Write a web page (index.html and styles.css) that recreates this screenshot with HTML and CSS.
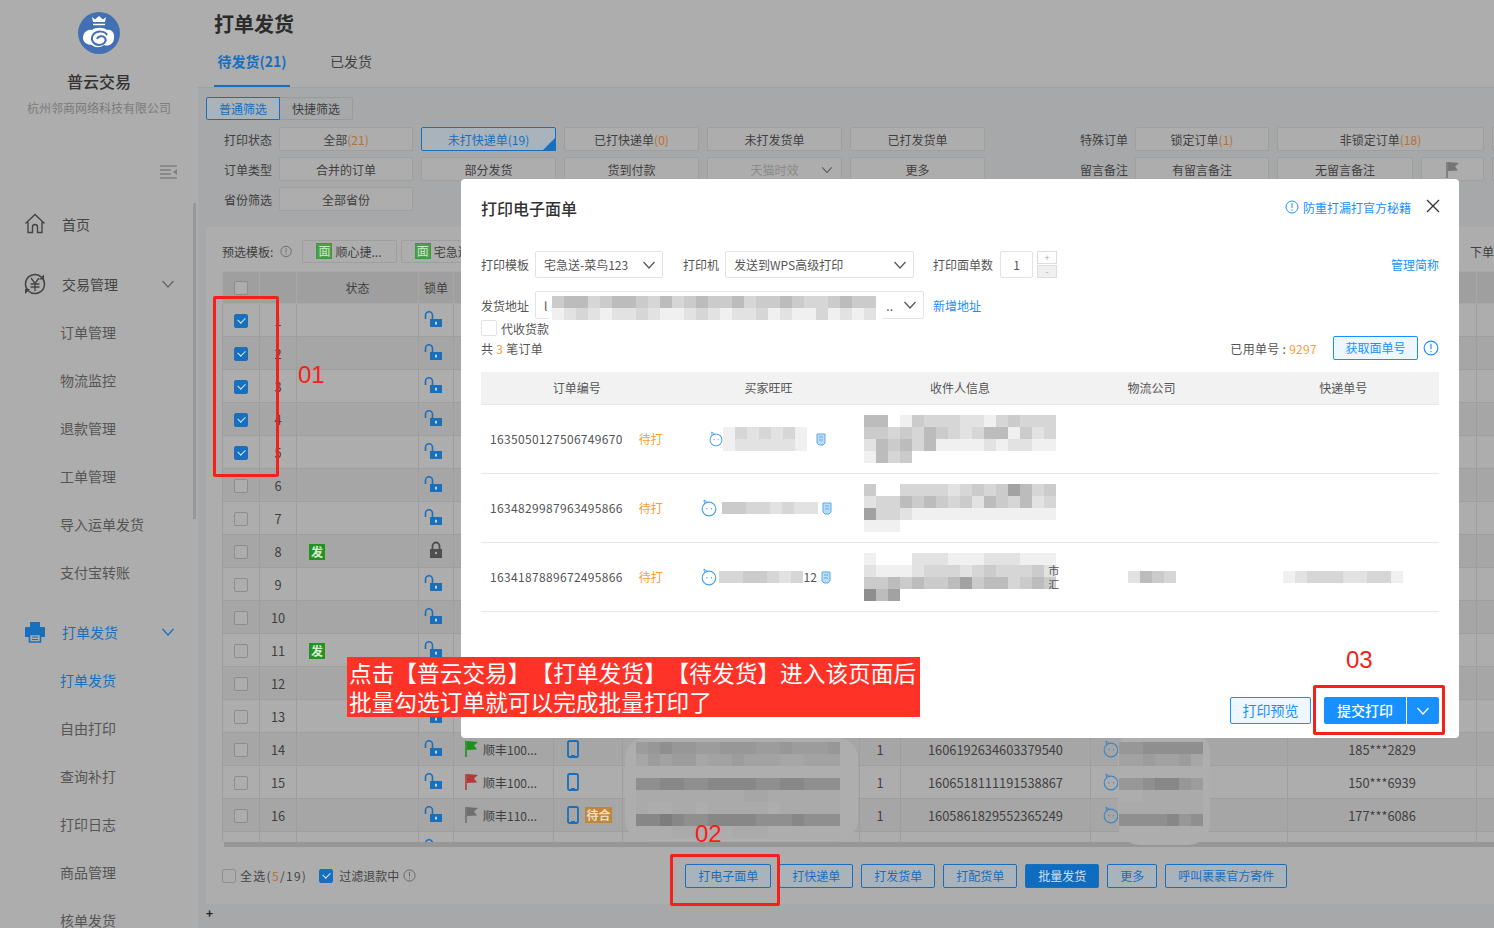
FILE: index.html
```html
<!DOCTYPE html>
<html lang="zh-CN">

<head>
    <meta charset="UTF-8">
    <title>打单发货</title>
    <link rel="stylesheet" href="styles.css">
</head>

<body>
    <svg class="sprite" width="0" height="0">
        <symbol id="i-info" viewBox="0 0 14 14"><circle cx="7" cy="7" r="6" fill="none" stroke="currentColor"/><path d="M7 3.200v5M7 9.600v1.200" stroke="currentColor" fill="none"/></symbol>
        <symbol id="i-chev" viewBox="0 0 14 14"><path d="M1.500 4l5.500 6 5.500-6" fill="none" stroke="currentColor" stroke-width="1.200"/></symbol>
        <symbol id="i-open" viewBox="0 0 18 16"><path d="M1.500 8V4.300a3.500 3.500 0 0 1 7 0V8" fill="none" stroke="currentColor" stroke-width="1.600"/><path d="M6 8h12v8H6z" fill="currentColor"/><path d="M12 10.800v2.600" stroke="#ddd" stroke-width="1.800"/></symbol>
        <symbol id="i-lock" viewBox="0 0 14 18"><path d="M3.500 8V5a3.500 3.500 0 0 1 7 0v3" fill="none" stroke="currentColor" stroke-width="1.800"/><path d="M1 8h12v9H1z" fill="currentColor"/><circle cx="7" cy="12" r="1.200" fill="#aaa"/></symbol>
        <symbol id="i-flag" viewBox="0 0 14 18"><path d="M1 1v16" stroke="currentColor" stroke-width="1.600"/><path d="M2 1l11 1-4 3.500 3 4-10 .5z" fill="currentColor"/></symbol>
        <symbol id="i-phone" viewBox="0 0 12 18"><rect x="1" y="1" width="10" height="16" rx="1.600" fill="none" stroke="currentColor" stroke-width="1.800"/><path d="M4 15.500h4" stroke="currentColor"/></symbol>
        <symbol id="i-ww" viewBox="0 0 16 18"><circle cx="8" cy="10" r="6.800" fill="none" stroke="currentColor" stroke-width="1.200"/><path d="M3.500 4.500 3 1l3.500 2.400" fill="none" stroke="currentColor"/><path d="M6 9v1.400M10.500 9v1.400" stroke="currentColor"/></symbol>
        <symbol id="i-copy" viewBox="0 0 10 14"><path d="M1 2h8v9l-2 2H3l-2-2z" fill="#bcdcf8" stroke="#5aa9e8"/><path d="M3 5h4M3 8h4" stroke="#5aa9e8"/></symbol>
    </svg>

    <div class="app">
        <aside class="sidebar">
            <svg class="logo" width="44" height="44" viewBox="0 0 44 44">
                <circle cx="22" cy="22" r="21" fill="#4370b2"/>
                <path d="M15 6l3 2.500 4-3.500 4 3.500L29 6l-1 5H16z" fill="#fff"/>
                <path d="M16 13.500h12" stroke="#fff" stroke-width="1.500"/>
                <path d="M6 27c0-5 4-9 9-8 3-3 12-3 15 0 5-1 8 4 7 8 0 6-6 9-10 7-4 3-9 3-12 0-5 0-9-3-9-7z" fill="#fff"/>
                <path d="M30 24c-2-4-10-5-14 0-3 5 1 10 6 10 5 0 8-4 6-7-2-3-7-2-8 1" fill="none" stroke="#4370b2" stroke-width="2"/>
            </svg>
            <div class="brand">普云交易</div>
            <div class="company">杭州邻商网络科技有限公司</div>
            <div class="collapse">
                <svg width="18" height="16" viewBox="0 0 18 16"><path d="M1 2h17M1 6h11M1 10h11M1 14h17" stroke="#7f7f7f" stroke-width="1.500"/><path d="M18 5v6l-4-3z" fill="#7f7f7f"/></svg>
            </div>
            <nav class="menu">
                <a class="menu-top">
                    <svg width="22" height="22" viewBox="0 0 22 22"><path d="M1.500 10.500 11 1.500l9.500 9M4 9v10.500h4.500V14a2.500 2.500 0 0 1 5 0v5.500H18V9" fill="none" stroke="#444" stroke-width="1.400"/></svg>
                    <span>首页</span>
                </a>
                <a class="menu-top">
                    <svg width="22" height="22" viewBox="0 0 22 22"><path d="M17.700 4.300A9.500 9.500 0 0 0 1.500 11c0 2.600 1 5 2.800 6.700M4.300 17.700A9.500 9.500 0 0 0 20.500 11c0-2.600-1-5-2.800-6.700" fill="none" stroke="#444" stroke-width="1.500"/><path d="M20 1.500v5h-5zM1 21v-5h5z" fill="#444"/><path d="M7 5l4 5.500L15 5M6.500 11h9M6.500 14h9M11 10.500V18" fill="none" stroke="#444" stroke-width="1.300"/></svg>
                    <span>交易管理</span>
                    <svg class="chev" width="14" height="14"><use href="#i-chev"/></svg>
                </a>
                <a class="menu-sub">订单管理</a>
                <a class="menu-sub">物流监控</a>
                <a class="menu-sub">退款管理</a>
                <a class="menu-sub">工单管理</a>
                <a class="menu-sub">导入运单发货</a>
                <a class="menu-sub">支付宝转账</a>
                <a class="menu-top active">
                    <svg width="22" height="22" viewBox="0 0 22 22"><path d="M6 1h10v5H6z" fill="#176fbd"/><path d="M2 6h18a1 1 0 0 1 1 1v9h-4v-3H5v3H1V7a1 1 0 0 1 1-1z" fill="#176fbd"/><path d="M5.500 13.500h11v7.500h-11z" fill="none" stroke="#176fbd" stroke-width="1.600"/><path d="M8 16h6M8 18.500h6" stroke="#176fbd"/></svg>
                    <span>打单发货</span>
                    <svg class="chev" width="14" height="14"><use href="#i-chev"/></svg>
                </a>
                <a class="menu-sub active">打单发货</a>
                <a class="menu-sub">自由打印</a>
                <a class="menu-sub">查询补打</a>
                <a class="menu-sub">打印日志</a>
                <a class="menu-sub">商品管理</a>
                <a class="menu-sub">核单发货</a>
            </nav>
            <div class="side-scroll"></div>
        </aside>

        <main class="main">
            <div class="page-head">
                <h1>打单发货</h1>
                <div class="tabs">
                    <a class="tab active">待发货(21)</a>
                    <a class="tab">已发货</a>
                </div>
            </div>

            <div class="content">
                <div class="switch">
                    <a class="active">普通筛选</a>
                    <a>快捷筛选</a>
                </div>

                <div class="filters">
                    <div class="filter-row">
                        <label>打印状态</label>
                        <a class="fb w134">全部<em>(21)</em></a>
                        <a class="fb w135 on">未打快递单<em class="blue">(19)</em><i class="corner"></i></a>
                        <a class="fb w135">已打快递单<em>(0)</em></a>
                        <a class="fb w135">未打发货单</a>
                        <a class="fb w135">已打发货单</a>
                        <label class="label-right">特殊订单</label>
                        <a class="fb w134">锁定订单<em>(1)</em></a>
                        <a class="fb w207">非锁定订单<em>(18)</em></a>
                        <a class="fb w40"></a>
                    </div>
                    <div class="filter-row">
                        <label>订单类型</label>
                        <a class="fb w134">合并的订单</a>
                        <a class="fb w135">部分发货</a>
                        <a class="fb w135">货到付款</a>
                        <a class="fb w135 muted">天猫时效<svg width="12" height="12"><use href="#i-chev"/></svg></a>
                        <a class="fb w135">更多</a>
                        <label class="label-right">留言备注</label>
                        <a class="fb w134">有留言备注</a>
                        <a class="fb w136">无留言备注</a>
                        <a class="fb w63"><svg class="flag-grey" width="14" height="18"><use href="#i-flag"/></svg></a>
                        <a class="fb w40"></a>
                    </div>
                    <div class="filter-row">
                        <label>省份筛选</label>
                        <a class="fb w134">全部省份</a>
                    </div>
                </div>

                <section class="card">
                    <div class="preset">
                        <span>预选模板:</span>
                        <svg class="tip" width="13" height="13"><use href="#i-info"/></svg>
                        <a class="preset-btn"><b class="mian">面</b>顺心捷...</a>
                        <a class="preset-btn"><b class="mian">面</b>宅急送</a>
                        <span class="preset-end">下单</span>
                    </div>
                    <div class="table-wrap">
                        <table class="orders">
                            <colgroup>
                                <col class="c1"><col class="c2"><col class="c3"><col class="c4"><col class="c5">
                                <col class="c6"><col class="c7"><col class="c8"><col class="c9"><col class="c10">
                                <col class="c11"><col class="c12">
                            </colgroup>
                            <thead>
                                <tr>
                                    <th><i class="cb"></i></th>
                                    <th></th>
                                    <th>状态</th>
                                    <th>锁单</th>
                                    <th></th><th></th><th></th><th></th><th></th><th></th><th></th><th></th>
                                </tr>
                            </thead>
                            <tbody id="order-rows"></tbody>
                        </table>
                    </div>
                    <div class="hscroll"></div>
                    <div class="card-foot">
                        <i class="cb"></i><span class="foot-label foot-count">全选(<em>5</em>/19)</span>
                        <i class="cb checked foot-check"></i><span class="foot-label foot-filter">过滤退款中</span>
                        <svg class="tip foot-tip" width="13" height="13"><use href="#i-info"/></svg>
                        <div class="foot-btns">
                            <a class="ob w86">打电子面单</a>
                            <a class="ob w74">打快递单</a>
                            <a class="ob w74">打发货单</a>
                            <a class="ob w74">打配货单</a>
                            <a class="ob w74 fill">批量发货</a>
                            <a class="ob w50">更多</a>
                            <a class="ob w122">呼叫裹裹官方寄件</a>
                        </div>
                    </div>
                </section>
                <div class="plus">+</div>
            </div>
        </main>
    </div>

    <div class="blob blob-a"><div class="mosaic" data-cells="56766556665565556/35455344544433444/................./77887788887788777/22222222233222222/21122122222122222/88987788887778777/11122111222111111"></div></div>
    <div class="blob blob-b"><div class="mosaic" data-cells="6677777/4454453/......./6678865/1122222/2222222/7777867/1111111"></div></div>

    <div class="modal">
        <div class="modal-head">
            <h2>打印电子面单</h2>
            <a class="modal-link"><svg width="14" height="14"><use href="#i-info"/></svg>防重打漏打官方秘籍</a>
            <svg class="modal-close" width="14" height="14" viewBox="0 0 14 14"><path d="M1 1l12 12M13 1 1 13" stroke="#333" stroke-width="1.300"/></svg>
        </div>

        <div class="form-row">
            <label>打印模板</label>
            <div class="select w128">宅急送-菜鸟123<svg width="14" height="14"><use href="#i-chev"/></svg></div>
            <label class="ml20">打印机</label>
            <div class="select w189">发送到WPS高级打印<svg width="14" height="14"><use href="#i-chev"/></svg></div>
            <label class="ml19">打印面单数</label>
            <div class="count">1</div>
            <div class="stepper"><span>+</span><span class="minus">-</span></div>
            <a class="link push">管理简称</a>
        </div>

        <div class="form-row addr">
            <label>发货地址</label>
            <div class="select w389">
                <span>l</span><span class="dots">..</span><svg width="14" height="14"><use href="#i-chev"/></svg>
                <div class="mosaic addr-mosaic" data-cells="455345543534544534454334544/123212232112321223121131212"></div>
            </div>
            <a class="link ml9">新增地址</a>
        </div>

        <div class="cod"><i class="cb light"></i>代收货款</div>

        <div class="summary">
            <span>共 <em>3</em> 笔订单</span>
            <div class="summary-right">
                <span>已用单号 : <em>9297</em></span>
                <a class="get-no">获取面单号</a>
                <svg class="get-tip" width="16" height="16"><use href="#i-info"/></svg>
            </div>
        </div>

        <table class="ship">
            <thead>
                <tr><th>订单编号</th><th>买家旺旺</th><th>收件人信息</th><th>物流公司</th><th>快递单号</th></tr>
            </thead>
            <tbody>
                <tr>
                    <td><div class="order-no"><span>1635050127506749670</span><em>待打</em></div></td>
                    <td>
                        <div class="buyer first">
                            <svg width="14" height="16"><use href="#i-ww"/></svg>
                            <div class="mosaic" data-cells="1323231/1222221"></div>
                            <svg class="copy" width="10" height="14"><use href="#i-copy"/></svg>
                        </div>
                    </td>
                    <td><div class="mosaic" data-cells="5501433322134333/4434354323551423/2545351111212211/1534000000000000"></div></td>
                    <td></td><td></td>
                </tr>
                <tr>
                    <td><div class="order-no"><span>1634829987963495866</span><em>待打</em></div></td>
                    <td>
                        <div class="buyer">
                            <svg width="16" height="18"><use href="#i-ww"/></svg>
                            <div class="mosaic" data-cells="44332322"></div>
                            <svg class="copy" width="10" height="14"><use href="#i-copy"/></svg>
                        </div>
                    </td>
                    <td><div class="mosaic" data-cells="4003333234346534/2335454342543523/6332111111111111/1110000000000000"></div></td>
                    <td></td><td></td>
                </tr>
                <tr>
                    <td><div class="order-no"><span>1634187889672495866</span><em>待打</em></div></td>
                    <td>
                        <div class="buyer third">
                            <svg width="16" height="18"><use href="#i-ww"/></svg>
                            <div class="mosaic" data-cells="3344323"></div><span class="buyer-no">12</span>
                            <svg class="copy" width="10" height="14"><use href="#i-copy"/></svg>
                        </div>
                    </td>
                    <td>
                        <div class="recv-wrap">
                            <div class="mosaic" data-cells="1000222111222111/2111233323433342/4454544564553454/7560000000000000"></div>
                            <span class="recv-tail">市<br>汇</span>
                        </div>
                    </td>
                    <td><div class="mosaic center" data-cells="2543"></div></td>
                    <td><div class="mosaic center" data-cells="1233322331"></div></td>
                </tr>
            </tbody>
        </table>

        <div class="modal-foot">
            <a class="preview">打印预览</a>
            <a class="submit">提交打印</a>
            <a class="submit-more"><svg width="14" height="14"><use href="#i-chev"/></svg></a>
        </div>
    </div>

    <div class="banner">点击【普云交易】【打单发货】【待发货】进入该页面后<br>批量勾选订单就可以完成批量打印了</div>
    <div class="red-box box-01"></div>
    <div class="red-box box-02"></div>
    <div class="red-box box-03"></div>
    <div class="red-num num-01">01</div>
    <div class="red-num num-02">02</div>
    <div class="red-num num-03">03</div>

    <script src="script.js"></script>
</body>

</html>
```
FILE: styles.css
```css
* {
    box-sizing: border-box;
}

html,
body {
    margin: 0;
    height: 100%;
    overflow: hidden;
}

body {
    font-family: "Noto Sans CJK SC", "Noto Sans", sans-serif;
    font-size: 12px;
    color: #3f3f3f;
    background-color: #a6a8aa;
}

em {
    font-style: normal;
}

.sprite {
    position: absolute;
}

.app {
    display: flex;
    height: 928px;
}

/* sidebar */
.sidebar {
    position: relative;
    width: 198px;
    flex: none;
    height: 928px;
    overflow: hidden;
    background-color: #adadad;
    text-align: center;
}

.logo {
    display: block;
    margin: 11px auto 0;
}

.brand {
    margin-top: 14px;
    font-size: 16px;
    line-height: 24px;
    font-weight: 500;
    color: #333;
}

.company {
    margin-top: 5px;
    line-height: 20px;
    color: #7b7b7b;
}

.collapse {
    height: 16px;
    margin-top: 46px;
    padding-left: 159px;
    text-align: left;
}

.menu {
    margin-top: 20px;
}

.menu-top {
    display: flex;
    align-items: center;
    height: 48px;
    padding-left: 24px;
    font-size: 14px;
    color: #444;
}

.menu-top + .menu-top,
.menu-sub + .menu-top {
    margin-top: 12px;
}

.menu-top span {
    margin-left: 16px;
}

.menu-top .chev {
    margin-left: auto;
    margin-right: 23px;
    color: #666;
}

.menu-top.active,
.menu-top.active .chev,
.menu-sub.active {
    color: #176fbd;
}

.menu-sub {
    display: block;
    height: 48px;
    line-height: 48px;
    padding-left: 60px;
    text-align: left;
    font-size: 14px;
    color: #555;
}

.side-scroll {
    position: absolute;
    left: 193px;
    top: 203px;
    width: 3px;
    height: 316px;
    background-color: #989898;
}

/* page head */
.main {
    flex: 1;
    min-width: 0;
    height: 928px;
    overflow: hidden;
}

.page-head {
    height: 88px;
    padding: 10px 0 0 16px;
    background-color: #adadad;
    border-bottom: 1px solid #a0a0a0;
}

.page-head h1 {
    margin: 0;
    font-size: 20px;
    line-height: 28px;
    font-weight: 700;
    color: #2c2c2c;
}

.tabs {
    display: flex;
    gap: 40px;
    margin-top: 9px;
}

.tab {
    height: 40px;
    line-height: 28px;
    font-size: 14px;
    color: #444;
}

.tab.active {
    width: 76px;
    text-align: center;
    font-weight: 700;
    color: #176fbd;
    border-bottom: 2px solid #176fbd;
}

/* filters */
.content {
    padding: 9px 0 0 8px;
}

.switch {
    display: flex;
    width: 147px;
    height: 23px;
    line-height: 22px;
    text-align: center;
}

.switch a {
    flex: 1;
    border: 1px solid #9b9b9b;
    border-left: 0;
    border-radius: 0 2px 2px 0;
}

.switch a.active {
    flex: none;
    width: 74px;
    color: #176fbd;
    background-color: #a9b3bc;
    border: 1px solid #176fbd;
    border-radius: 2px 0 0 2px;
}

.filters {
    display: flex;
    flex-direction: column;
    gap: 6px;
    margin-top: 7px;
    padding-left: 18px;
}

.filter-row {
    display: flex;
    gap: 8px;
    height: 24px;
    line-height: 22px;
}

.filter-row label {
    width: 47px;
    line-height: 26px;
    flex: none;
    white-space: nowrap;
}

.filter-row .label-right {
    margin-left: 87px;
}

.fb {
    flex: none;
    position: relative;
    display: flex;
    align-items: center;
    justify-content: center;
    height: 24px;
    padding-top: 1px;
    background-color: #adadad;
    border: 1px solid #9f9f9f;
    border-radius: 2px;
}

.fb em {
    color: #b86f30;
}

.fb em.blue {
    color: #176fbd;
}

.fb.on {
    color: #176fbd;
    border-color: #176fbd;
    background-color: #a9b3bc;
}

.corner {
    position: absolute;
    right: -1px;
    bottom: -1px;
    border-style: solid;
    border-width: 0 0 14px 14px;
    border-color: transparent transparent #176fbd transparent;
}

.fb.muted {
    color: #8a8a8a;
}

.fb.muted svg {
    position: absolute;
    right: 8px;
    top: 6px;
    color: #555;
}

.flag-grey {
    color: #757575;
}

.w40 { width: 40px; }
.w63 { width: 63px; }
.w134 { width: 134px; }
.w135 { width: 135px; }
.w136 { width: 136px; }
.w207 { width: 207px; }

/* card + table */
.card {
    height: 677px;
    margin-top: 16px;
    padding: 12px 0 0 16px;
    background-color: #adadad;
    border-radius: 3px 0 0 0;
}

.preset {
    display: flex;
    align-items: center;
    height: 24px;
    white-space: nowrap;
}

.tip {
    margin-left: 7px;
    color: #666;
}

.preset-btn {
    display: flex;
    align-items: center;
    width: 100px;
    height: 23px;
    margin-left: 10px;
    padding-left: 13px;
    border: 1px solid #9f9f9f;
    border-radius: 2px;
}

.preset-btn + .preset-btn {
    margin-left: 4px;
}

.mian {
    width: 16px;
    height: 16px;
    margin-right: 3px;
    line-height: 14px;
    text-align: center;
    font-size: 12px;
    font-weight: 400;
    color: #cfe6c8;
    background-color: #4aa04a;
    border: 1px solid #3d9a3d;
}

.preset-end {
    margin-left: 975px;
}

.table-wrap {
    height: 571px;
    margin-top: 8px;
    overflow: hidden;
}

.orders {
    width: 1354px;
    table-layout: fixed;
    border-collapse: collapse;
}

.c1, .c2 { width: 37px; }
.c3 { width: 122px; }
.c4 { width: 35px; }
.c5 { width: 100px; }
.c6 { width: 69px; }
.c7 { width: 237px; }
.c8 { width: 41px; }
.c9 { width: 190px; }
.c10 { width: 197px; }
.c11 { width: 189px; }
.c12 { width: 100px; }

.orders th {
    height: 32px;
    font-weight: 400;
    background-color: #9f9f9f;
    border: 1px solid #a8a8a8;
    text-align: center;
}

.orders td {
    height: 33px;
    padding: 0;
    border: 1px solid #9e9e9e;
    text-align: center;
    font-size: 12.800px;
    white-space: nowrap;
    overflow: hidden;
}

.orders tbody tr:nth-child(even) {
    background-color: #a6a6a6;
}

.cb {
    display: inline-block;
    flex: none;
    width: 14px;
    height: 14px;
    vertical-align: middle;
    background-color: #adadad;
    border: 1px solid #8d8d8d;
    border-radius: 2px;
}

.orders .cb {
    display: block;
    margin: 1px auto 0;
}

.cb.checked {
    position: relative;
    background-color: #176fbd;
    border-color: #176fbd;
}

.cb.checked::after {
    content: "";
    position: absolute;
    left: 3px;
    top: 2px;
    width: 6px;
    height: 4px;
    border-left: 1.500px solid #d8e6f2;
    border-bottom: 1.500px solid #d8e6f2;
    transform: rotate(-45deg);
}

.lock-open {
    display: block;
    margin-left: 5px;
    margin-top: -2px;
    color: #1a6fba;
}

.lock-shut {
    display: block;
    margin: -3px 0 0 10px;
    color: #4e4e4e;
}

.fa {
    display: block;
    width: 16px;
    height: 16px;
    margin-left: 12px;
    margin-top: 1px;
    line-height: 16px;
    font-size: 12px;
    font-weight: 700;
    color: #d6ead0;
    background-color: #229322;
}

.ship-name {
    display: flex;
    align-items: center;
    padding-left: 11px;
    font-size: 12px;
}

.ship-name svg {
    margin-right: 4px;
}

.device {
    display: flex;
    align-items: center;
    padding-left: 13px;
    color: #1a6fba;
}

.wait {
    width: 27px;
    height: 16px;
    margin-left: 6px;
    line-height: 16px;
    font-size: 12px;
    font-weight: 700;
    color: #e8dcc0;
    background-color: #bf873c;
}

.ww-cell {
    display: block;
    margin-left: 12px;
    color: #3f86c4;
}

.hscroll {
    height: 5px;
    margin: 0 0 0 2px;
    background-color: #979797;
}

.card-foot {
    display: flex;
    align-items: center;
    height: 57px;
    color: #444;
}

.foot-label {
    margin-left: 4px;
}

.foot-count {
    letter-spacing: 1.300px;
    white-space: nowrap;
}

.foot-filter {
    margin-left: 6px;
}

.foot-label em {
    color: #b86f30;
}

.foot-check {
    margin-left: 12px;
}

.foot-tip {
    margin-left: 4px;
}

.foot-btns {
    display: flex;
    gap: 8px;
    margin-left: 269px;
}

.ob {
    height: 24px;
    line-height: 22px;
    text-align: center;
    color: #176fbd;
    background-color: #a9b3bc;
    border: 1px solid #176fbd;
    border-radius: 2px;
}

.ob.fill {
    color: #cde0f0;
    background-color: #0f6cbe;
}

.w50 { width: 50px; }
.w74 { width: 74px; }
.w86 { width: 86px; }
.w122 { width: 122px; }

.plus {
    height: 23px;
    line-height: 18px;
    font-weight: 700;
    color: #222;
}

/* mosaics */
.mosaic {
    display: inline-block;
    vertical-align: middle;
}

.mosaic-row {
    display: flex;
    height: 12px;
}

.mosaic-row span {
    flex: none;
    width: 12px;
    height: 12px;
}

.m1 { background-color: #f0f0f0; }
.m2 { background-color: #e2e2e2; }
.m3 { background-color: #d6d6d6; }
.m4 { background-color: #cbcbcb; }
.m5 { background-color: #bcbcbc; }
.m6 { background-color: #a2a2a2; }
.m7 { background-color: #8e8e8e; }
.m8 { background-color: #868686; }
.m9 { background-color: #777; }

.blob {
    position: absolute;
    background-color: #aeaeae;
    border-radius: 22px;
}

.blob-a {
    left: 625px;
    top: 737px;
    width: 233px;
    height: 104px;
    padding: 5px 0 0 11px;
}

.blob-b {
    left: 1118px;
    top: 730px;
    width: 92px;
    height: 115px;
    padding: 12px 0 0 1px;
}

.blob .m1 { background-color: #adadad; }
.blob .m2 { background-color: #aaa; }
.blob .m3 { background-color: #a6a6a6; }
.blob .m4 { background-color: #a2a2a2; }
.blob .m5 { background-color: #9c9c9c; }
.blob .m6 { background-color: #979797; }
.blob .m7 { background-color: #8f8f8f; }
.blob .m8 { background-color: #878787; }
.blob .m9 { background-color: #7d7d7d; }

/* modal */
.modal {
    position: absolute;
    left: 461px;
    top: 179px;
    display: flex;
    flex-direction: column;
    width: 998px;
    height: 559px;
    padding: 0 20px;
    background-color: #fff;
    border-radius: 4px;
    color: #555;
}

.modal-head {
    display: flex;
    align-items: center;
    height: 58px;
    margin-bottom: 14px;
}

.modal-head h2 {
    margin: 0;
    font-size: 16px;
    font-weight: 500;
    color: #333;
}

.modal-link {
    display: flex;
    align-items: center;
    gap: 4px;
    margin-left: auto;
    margin-top: -2px;
    color: #1890ff;
}

.modal-close {
    margin-left: 15px;
    margin-right: -1px;
    margin-top: -4px;
}

.form-row {
    display: flex;
    align-items: center;
    height: 27px;
}

.form-row label {
    flex: none;
    white-space: nowrap;
}

.form-row.addr {
    height: 28px;
    margin-top: 13px;
}

.select {
    position: relative;
    display: flex;
    align-items: center;
    justify-content: space-between;
    height: 100%;
    margin-left: 6px;
    padding: 0 6px 0 8px;
    border: 1px solid #e3e3e3;
    border-radius: 2px;
    white-space: nowrap;
}

.select svg {
    color: #555;
}

.w128 { width: 128px; }
.w189 { width: 189px; }
.w389 { width: 389px; }

.ml20 { margin-left: 20px; }
.ml19 { margin-left: 19px; }
.ml9 { margin-left: 9px; }

.count {
    width: 33px;
    height: 27px;
    margin-left: 7px;
    line-height: 25px;
    text-align: center;
    border: 1px solid #e3e3e3;
    border-radius: 2px;
}

.stepper {
    display: flex;
    flex-direction: column;
    gap: 1px;
    margin-left: 4px;
}

.stepper span {
    width: 20px;
    height: 13px;
    line-height: 11px;
    text-align: center;
    font-size: 9px;
    color: #aaa;
    border: 1px solid #ddd;
}

.stepper .minus {
    background-color: #efefef;
}

.link {
    flex: none;
    color: #1890ff;
}

.push {
    margin-left: auto;
}

.dots {
    margin-left: auto;
    margin-right: 10px;
}

.addr-mosaic {
    position: absolute;
    left: 11px;
    top: 4px;
    padding: 0 9px 0 5px;
    background-color: #fff;
    border-radius: 6px;
}

.cod {
    display: flex;
    align-items: center;
    gap: 4px;
    height: 16px;
    margin-top: 1px;
}

.cb.light {
    width: 16px;
    height: 16px;
    background-color: #fff;
    border-color: #e3e3e3;
}

.summary {
    display: flex;
    align-items: center;
    justify-content: space-between;
    height: 24px;
    letter-spacing: .3px;
}

.summary em {
    color: #fa9d3b;
}

.summary-right {
    display: flex;
    align-items: center;
}

.get-no {
    width: 85px;
    height: 24px;
    margin-left: 16px;
    line-height: 22px;
    text-align: center;
    letter-spacing: 0;
    color: #1890ff;
    background-color: #eef7ff;
    border: 1px solid #1890ff;
    border-radius: 2px;
}

.get-tip {
    margin-left: 5px;
    color: #1890ff;
}

.ship {
    width: 958px;
    margin-top: 12px;
    table-layout: fixed;
    border-collapse: collapse;
}

.ship th {
    height: 32px;
    font-weight: 400;
    background-color: #f2f2f2;
    border-bottom: 1px solid #e8e8e8;
}

.ship td {
    height: 69px;
    padding: 0;
    border-bottom: 1px solid #e8e8e8;
    white-space: nowrap;
}

.order-no {
    padding-left: 9px;
    color: #555;
}

.order-no span {
    letter-spacing: .33px;
}

.order-no em {
    margin-left: 16px;
    color: #fa9d3b;
}

.buyer {
    display: flex;
    align-items: center;
    padding-left: 28px;
    color: #4aa3ef;
}

.buyer .mosaic {
    margin-left: 5px;
}

.buyer.first {
    padding-left: 36px;
}

.buyer.first .mosaic {
    margin-left: 0;
}

.buyer.first .copy {
    margin-left: 9px;
}

.buyer.third .mosaic {
    margin-left: 2px;
}

.buyer.third .buyer-no {
    margin-left: 1px;
}

.copy {
    margin-left: 4px;
}

.buyer-no {
    color: #555;
}

.recv-wrap {
    display: flex;
    align-items: center;
}

.recv-tail {
    margin-left: -8px;
    line-height: 14px;
    font-size: 11px;
}

.mosaic.center {
    display: block;
    width: fit-content;
    margin: 0 auto;
}

.modal-foot {
    display: flex;
    justify-content: flex-end;
    margin-top: auto;
    margin-bottom: 14px;
    height: 27px;
    line-height: 27px;
    text-align: center;
    font-size: 14px;
}

.preview {
    width: 81px;
    margin-right: 13px;
    line-height: 25px;
    color: #1890ff;
    background-color: #eef7ff;
    border: 1px solid #1890ff;
    border-radius: 2px;
}

.submit {
    width: 82px;
    color: #fff;
    font-weight: 500;
    background-color: #1890ff;
    border-radius: 2px 0 0 2px;
}

.submit-more {
    width: 32px;
    margin-left: 1px;
    color: #fff;
    background-color: #1890ff;
    border-radius: 0 2px 2px 0;
}

.submit-more svg {
    vertical-align: -2px;
}

/* annotations */
.banner {
    position: absolute;
    left: 347px;
    top: 657px;
    width: 573px;
    height: 60px;
    padding: 1px 0 0 2px;
    line-height: 29px;
    font-size: 22.700px;
    text-spacing-trim: space-all;
    color: #fff;
    white-space: nowrap;
    background-color: #ff3228;
}

.red-box {
    position: absolute;
    border: 3px solid #f5201a;
    border-radius: 2px;
}

.box-01 {
    left: 213px;
    top: 296px;
    width: 66px;
    height: 181px;
}

.box-02 {
    left: 670px;
    top: 854px;
    width: 110px;
    height: 52px;
}

.box-03 {
    left: 1313px;
    top: 685px;
    width: 132px;
    height: 50px;
}

.red-num {
    position: absolute;
    font-family: "Liberation Sans", sans-serif;
    font-size: 24px;
    line-height: 28px;
    color: #f5201a;
}

.num-01 { left: 298px; top: 361px; }
.num-02 { left: 695px; top: 820px; }
.num-03 { left: 1346px; top: 646px; }
```
FILE: script.js
```js
// order rows for the background table
const rows = [];
for (let i = 1; i <= 17; i++) {
    rows.push({ no: i, checked: i <= 5 });
}
rows[7].fa = true;
rows[7].locked = true;
rows[10].fa = true;
rows[13].extra = ['#1f8f1f', '顺丰100...', '', '1606192634603379540', '185***2829'];
rows[14].extra = ['#b23a3a', '顺丰100...', '', '1606518111191538867', '150***6939'];
rows[15].extra = ['#6f6f6f', '顺丰110...', '待合', '1605861829552365249', '177***6086'];

function renderRow(row) {
    const lock = row.locked
        ? '<svg class="lock-shut" width="14" height="18"><use href="#i-lock"/></svg>'
        : '<svg class="lock-open" width="18" height="16"><use href="#i-open"/></svg>';
    let cells = '<td></td><td></td><td></td><td></td><td></td><td></td><td></td><td></td>';
    if (row.extra) {
        const [flag, name, wait, orderNo, phone] = row.extra;
        cells = `<td><div class="ship-name"><svg width="14" height="18" style="color:${flag}"><use href="#i-flag"/></svg>${name}</div></td>
            <td><div class="device"><svg width="12" height="18"><use href="#i-phone"/></svg>${wait ? `<span class="wait">${wait}</span>` : ''}</div></td>
            <td></td><td>1</td><td>${orderNo}</td>
            <td><svg class="ww-cell" width="16" height="18"><use href="#i-ww"/></svg></td>
            <td>${phone}</td><td></td>`;
    }
    // the 17th row is cut by the scroller, its number never shows
    return `<tr>
        <td><i class="cb${row.checked ? ' checked' : ''}"></i></td>
        <td>${row.no < 17 ? row.no : ''}</td>
        <td>${row.fa ? '<span class="fa">发</span>' : ''}</td>
        <td>${lock}</td>
        ${cells}
    </tr>`;
}

document.querySelector('#order-rows').innerHTML = rows.map(renderRow).join('');

// pixelated blur blocks: each digit is a grey level, 0 or . is empty
document.querySelectorAll('.mosaic').forEach((el) => {
    el.innerHTML = el.dataset.cells.split('/').map((line) => {
        const cells = [...line.trim()].map((c) => `<span class="m${c === '.' ? 0 : c}"></span>`).join('');
        return `<div class="mosaic-row">${cells}</div>`;
    }).join('');
});
```
